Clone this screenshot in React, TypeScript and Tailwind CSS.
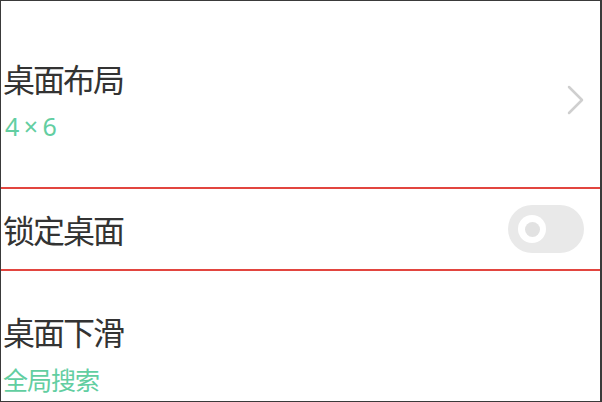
const font = "font-['Noto_Sans_CJK_SC','Noto_Sans',sans-serif]";

function Chevron() {
  return (
    <svg width="20" height="30" viewBox="0 0 20 30" fill="none" className="mr-[14px] mt-[84px]">
      <path d="M3 2 L16 15 L3 28" stroke="#cfcfcf" strokeWidth="2.5" strokeLinecap="round" strokeLinejoin="round" />
    </svg>
  );
}

function Toggle() {
  return (
    <div className="mr-[16px] flex h-[48px] w-[76px] items-center rounded-full bg-[#e9e9e9] pl-[10px]">
      <div className="flex h-[28px] w-[28px] items-center justify-center rounded-full bg-white">
        <div className="h-[15px] w-[15px] rounded-full bg-[#e2e2e2]" />
      </div>
    </div>
  );
}

const title = "text-[32px] leading-[40px] tracking-[-2px] text-[#333333]";
const sub = "mt-[13px] text-[25px] leading-[30px] tracking-[-1px] text-[#62cea1]";

export default function App() {
  return (
    <div className={`${font} flex h-[402px] w-[602px] flex-col overflow-hidden border-y border-l border-r-2 border-[#3a3a3a] bg-white`}>
      <div className="flex h-[186px] items-start justify-between">
        <div className="flex flex-col pl-[2px] pt-[57px]">
          <span className={title}>桌面布局</span>
          <span className={`${sub} font-['Noto_Sans',sans-serif] pl-[2px]`}>4 × 6</span>
        </div>
        <Chevron />
      </div>
      <div className="h-[2px] bg-[#e2453f]" />
      <div className="flex h-[80px] items-center justify-between">
        <span className={`pl-[2px] ${title}`}>锁定桌面</span>
        <Toggle />
      </div>
      <div className="h-[2px] bg-[#e2453f]" />
      <div className="flex flex-1 flex-col pl-[2px] pt-[40px]">
        <span className={title}>桌面下滑</span>
        <span className={sub}>全局搜索</span>
      </div>
    </div>
  );
}
